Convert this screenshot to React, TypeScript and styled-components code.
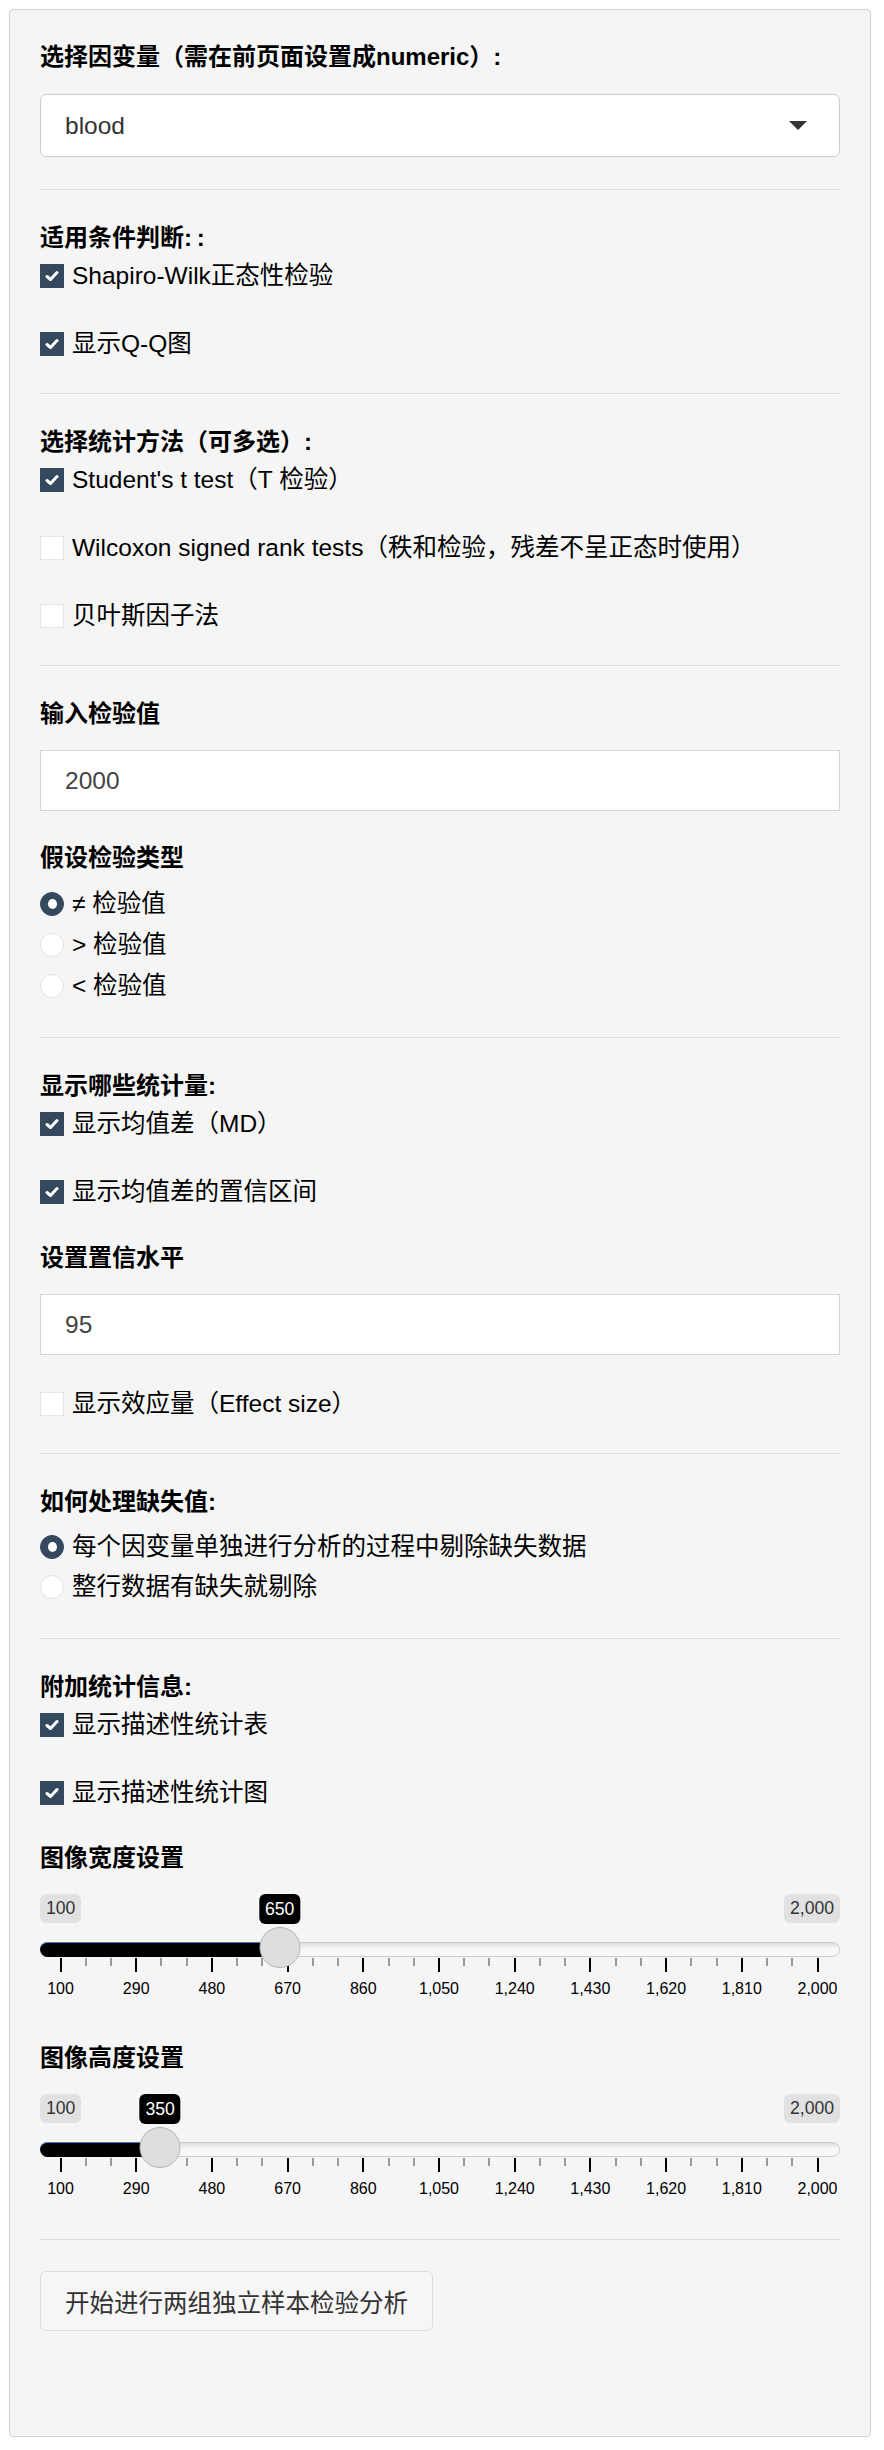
import React from "react";
import styled, { createGlobalStyle } from "styled-components";

const GlobalStyle = createGlobalStyle`
  html, body {
    margin: 0;
    padding: 0;
    background: #ffffff;
  }
  body {
    font-family: "Liberation Sans", "Noto Sans CJK SC", sans-serif;
    font-size: 24.5px;
    line-height: 34px;
    color: #000;
  }
`;

const Page = styled.div`
  padding: 9px 0 12px 9px;
`;

const Well = styled.div`
  width: 862px;
  box-sizing: border-box;
  background: #f5f5f5;
  border: 1px solid #d0d0d0;
  border-radius: 4px;
  padding: 30px;
`;

const Title = styled.div<{ $mt?: number }>`
  font-weight: 700;
  font-size: 24px;
  height: 34px;
  margin-top: ${(p) => p.$mt ?? 0}px;
  white-space: nowrap;
`;

const Divider = styled.hr<{ $mt?: number }>`
  border: 0;
  border-top: 1px solid #dddddd;
  margin: ${(p) => p.$mt ?? 32}px 0 31px;
  height: 0;
`;

const SelectBox = styled.div`
  margin-top: 20px;
  height: 63px;
  box-sizing: border-box;
  background: #fff;
  border: 1px solid #cccccc;
  border-radius: 6px;
  display: flex;
  align-items: center;
  justify-content: space-between;
  padding: 0 32px 0 24px;
  color: #333;
`;

const Caret = styled.span`
  width: 0;
  height: 0;
  border-left: 9px solid transparent;
  border-right: 9px solid transparent;
  border-top: 9px solid #333;
`;

const TextInput = styled.div<{ $mt?: number }>`
  margin-top: ${(p) => p.$mt ?? 19}px;
  height: 61px;
  box-sizing: border-box;
  background: #fff;
  border: 1px solid #d4d6dc;
  display: flex;
  align-items: center;
  padding: 0 24px;
  color: #444;
`;

const Row = styled.div<{ $mt: number }>`
  display: flex;
  align-items: center;
  gap: 8px;
  height: 34px;
  margin-top: ${(p) => p.$mt}px;
  white-space: nowrap;
`;

const Box = styled.span<{ $on: boolean }>`
  width: 24px;
  height: 24px;
  box-sizing: border-box;
  flex: none;
  display: flex;
  align-items: center;
  justify-content: center;
  background: ${(p) => (p.$on ? "#34495e" : "#ffffff")};
  border: 1px solid ${(p) => (p.$on ? "#34495e" : "#e6e6e6")};
`;

const Circle = styled.span<{ $on: boolean }>`
  width: 24px;
  height: 24px;
  box-sizing: border-box;
  flex: none;
  border-radius: 50%;
  background: ${(p) => (p.$on ? "#34495e" : "#ffffff")};
  border: 1px solid ${(p) => (p.$on ? "#34495e" : "#e3e3e3")};
  display: flex;
  align-items: center;
  justify-content: center;

  &::after {
    content: "";
    display: ${(p) => (p.$on ? "block" : "none")};
    width: 9px;
    height: 10px;
    border-radius: 50%;
    background: #fff;
  }
`;

const Check = ({ on, mt, children }: { on: boolean; mt: number; children: React.ReactNode }) => (
  <Row $mt={mt}>
    <Box $on={on}>
      {on && (
        <svg width="14" height="12" viewBox="0 0 14 12">
          <path d="M2 6.5 L5.5 9.5 L12 2.5" fill="none" stroke="#fff" strokeWidth="3" strokeLinecap="round" strokeLinejoin="round" />
        </svg>
      )}
    </Box>
    <span>{children}</span>
  </Row>
);

const Radio = ({ on, mt, children }: { on: boolean; mt: number; children: React.ReactNode }) => (
  <Row $mt={mt}>
    <Circle $on={on} />
    <span>{children}</span>
  </Row>
);

/* slider widget: parts overlap each other, so they are placed inside the box */
const SliderWrap = styled.div`
  position: relative;
  margin-top: 19px;
  height: 106px;
`;

const EdgeLabel = styled.span<{ $side: "left" | "right" }>`
  position: absolute;
  top: 0;
  ${(p) => p.$side}: 0;
  height: 29px;
  line-height: 29px;
  padding: 0 6px;
  border-radius: 6px;
  background: #e1e1e1;
  color: #333;
  font-size: 17.6px;
`;

const ValueLabel = styled.span`
  position: absolute;
  top: 0;
  height: 30px;
  line-height: 30px;
  padding: 0 6px;
  border-radius: 6px;
  background: #000;
  color: #fff;
  font-size: 17.6px;
  transform: translateX(-50%);
  z-index: 2;
`;

const Track = styled.div`
  position: absolute;
  top: 48px;
  left: 0;
  right: 0;
  height: 15px;
  box-sizing: border-box;
  border: 1px solid #cccccc;
  border-radius: 8px;
  background: linear-gradient(to bottom, #dddddd 0%, #f8f8f8 45%, #f8f8f8 100%);
`;

const Bar = styled.div`
  position: absolute;
  top: 48px;
  left: 0;
  height: 15px;
  box-sizing: border-box;
  border-top: 1px solid #3f7cc4;
  border-radius: 8px 0 0 8px;
  background: #000;
`;

const Handle = styled.div`
  position: absolute;
  top: 33px;
  width: 41px;
  height: 41px;
  box-sizing: border-box;
  border-radius: 50%;
  border: 1px solid #b5b5b5;
  background: #dedede;
  transform: translateX(-50%);
  z-index: 3;
`;

const Tick = styled.span<{ $major: boolean }>`
  position: absolute;
  top: 64px;
  width: 2px;
  height: ${(p) => (p.$major ? 14 : 8)}px;
  background: ${(p) => (p.$major ? "#000" : "#9a9a9a")};
  transform: translateX(-1px);
`;

const TickText = styled.span`
  position: absolute;
  top: 85px;
  font-size: 16px;
  line-height: 20px;
  color: #000;
  transform: translateX(-50%);
  white-space: nowrap;
`;

const TICKS = ["100", "290", "480", "670", "860", "1,050", "1,240", "1,430", "1,620", "1,810", "2,000"];
const START = 20.5;
const SPAN = 757;

const Slider = ({ value }: { value: number }) => {
  const x = START + ((value - 100) / 1900) * SPAN;
  const step = SPAN / 10;
  const marks: React.ReactNode[] = [];
  TICKS.forEach((t, i) => {
    const tx = START + i * step;
    marks.push(<Tick key={"M" + i} $major style={{ left: tx }} />);
    marks.push(<TickText key={"T" + i} style={{ left: tx }}>{t}</TickText>);
    if (i < 10) {
      marks.push(<Tick key={"a" + i} $major={false} style={{ left: tx + step / 3 }} />);
      marks.push(<Tick key={"b" + i} $major={false} style={{ left: tx + (2 * step) / 3 }} />);
    }
  });
  return (
    <SliderWrap>
      <EdgeLabel $side="left">100</EdgeLabel>
      <EdgeLabel $side="right">2,000</EdgeLabel>
      <ValueLabel style={{ left: x }}>{value}</ValueLabel>
      <Track />
      <Bar style={{ width: x }} />
      {marks}
      <Handle style={{ left: x }} />
    </SliderWrap>
  );
};

const RunButton = styled.button`
  margin-bottom: 75px;
  height: 60px;
  box-sizing: border-box;
  padding: 0 24px;
  border: 1px solid #dddddd;
  border-radius: 6px;
  background: #f6f6f6;
  color: #333;
  font-family: inherit;
  font-size: 24.5px;
  cursor: pointer;
`;

export default function App() {
  return (
    <Page>
      <GlobalStyle />
      <Well>
        <Title>选择因变量（需在前页面设置成numeric）:</Title>
        <SelectBox>
          <span>blood</span>
          <Caret />
        </SelectBox>

        <Divider />
        <Title>适用条件判断:&thinsp;:</Title>
        <Check on mt={4}>Shapiro-Wilk正态性检验</Check>
        <Check on mt={34}>显示Q-Q图</Check>

        <Divider />
        <Title>选择统计方法（可多选）:</Title>
        <Check on mt={4}>Student's t test（T 检验）</Check>
        <Check on={false} mt={34}>Wilcoxon signed rank tests（秩和检验，残差不呈正态时使用）</Check>
        <Check on={false} mt={34}>贝叶斯因子法</Check>

        <Divider />
        <Title>输入检验值</Title>
        <TextInput>2000</TextInput>
        <Title $mt={30}>假设检验类型</Title>
        <Radio on mt={12}>≠ 检验值</Radio>
        <Radio on={false} mt={7}>&gt; 检验值</Radio>
        <Radio on={false} mt={7}>&lt; 检验值</Radio>

        <Divider $mt={34} />
        <Title>显示哪些统计量:</Title>
        <Check on mt={4}>显示均值差（MD）</Check>
        <Check on mt={34}>显示均值差的置信区间</Check>
        <Title $mt={32}>设置置信水平</Title>
        <TextInput>95</TextInput>
        <Check on={false} mt={32}>显示效应量（Effect size）</Check>

        <Divider />
        <Title>如何处理缺失值:</Title>
        <Radio on mt={11}>每个因变量单独进行分析的过程中剔除缺失数据</Radio>
        <Radio on={false} mt={6}>整行数据有缺失就剔除</Radio>

        <Divider $mt={34} />
        <Title>附加统计信息:</Title>
        <Check on mt={4}>显示描述性统计表</Check>
        <Check on mt={34}>显示描述性统计图</Check>
        <Title $mt={31}>图像宽度设置</Title>
        <Slider value={650} />
        <Title $mt={41}>图像高度设置</Title>
        <Slider value={350} />

        <Divider $mt={39} />
        <RunButton>开始进行两组独立样本检验分析</RunButton>
      </Well>
    </Page>
  );
}
